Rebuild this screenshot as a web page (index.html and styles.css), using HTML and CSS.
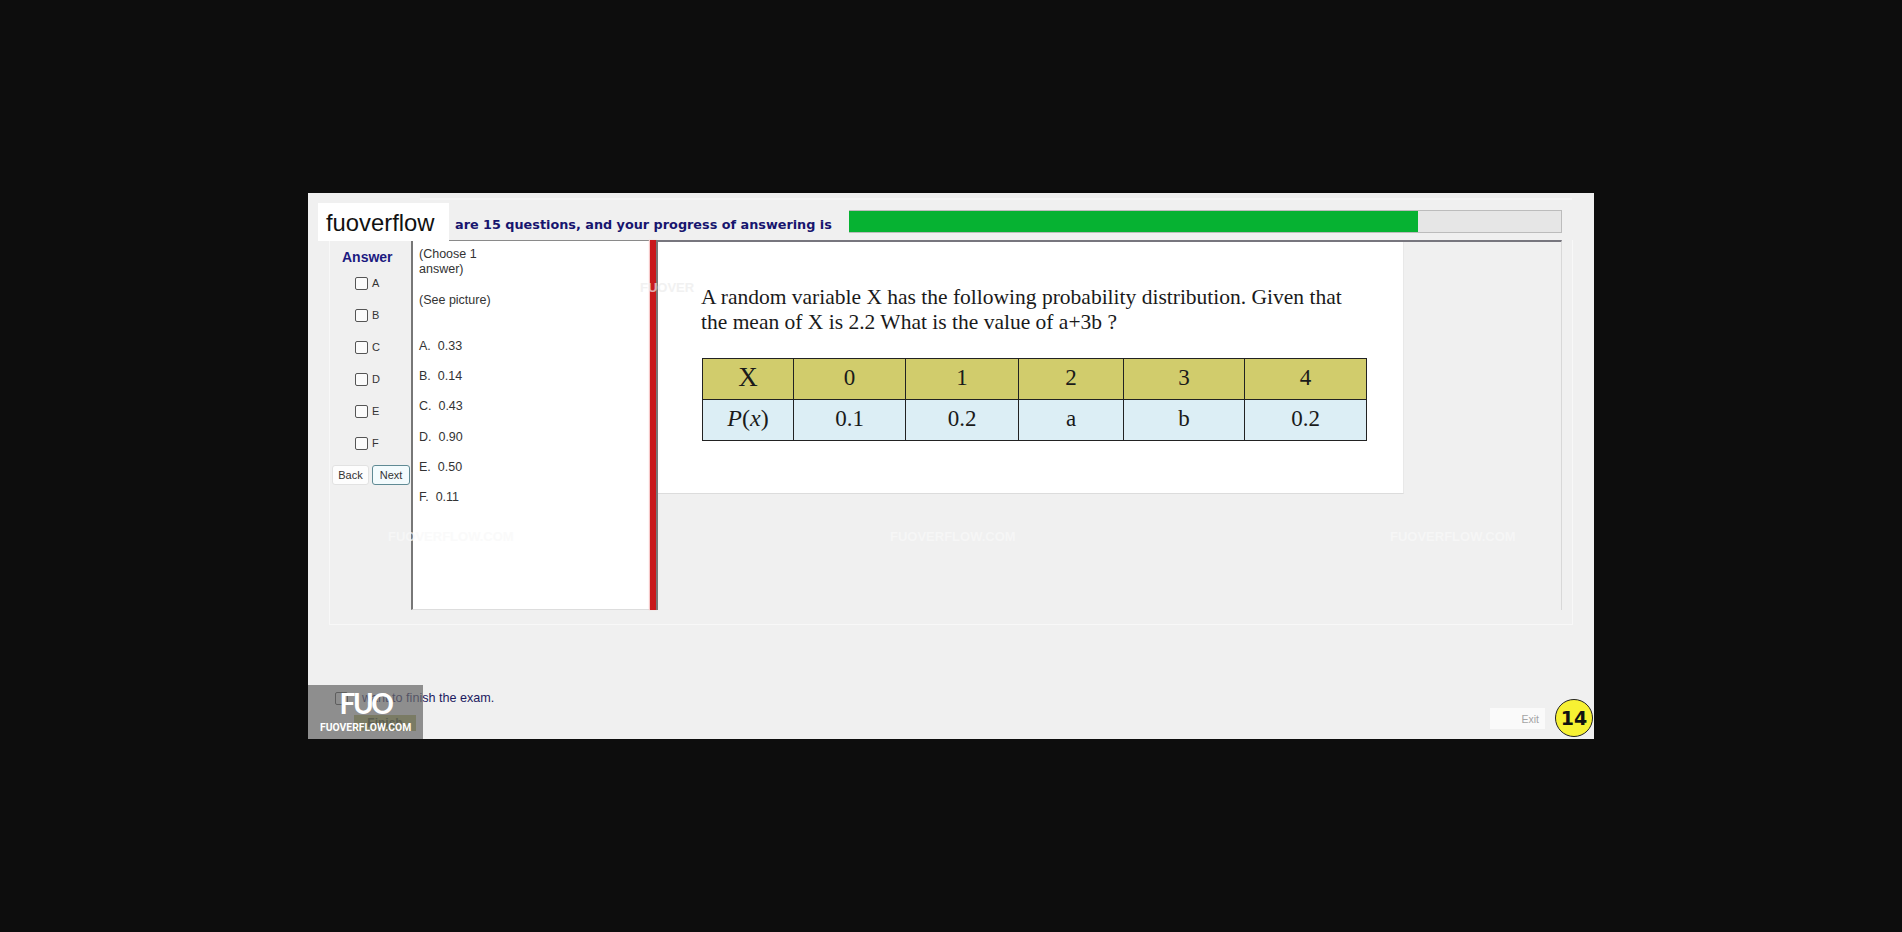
FILE: index.html
```html
<!DOCTYPE html>
<html lang="en">
<head>
<meta charset="utf-8">
<title>Exam</title>
<link rel="stylesheet" href="styles.css">
</head>
<body>
<div class="window">
  <div class="top-tab"></div>
  <header class="progress-row">
    <span class="progress-label">are 15 questions, and your progress of answering is</span>
    <div class="progress-track"><div class="progress-fill"></div></div>
  </header>
  <main class="panel">
    <section class="answers">
      <div class="answers-title">Answer</div>
      <label class="choice"><span class="box"></span>A</label>
      <label class="choice"><span class="box"></span>B</label>
      <label class="choice"><span class="box"></span>C</label>
      <label class="choice"><span class="box"></span>D</label>
      <label class="choice"><span class="box"></span>E</label>
      <label class="choice"><span class="box"></span>F</label>
      <div class="nav">
        <button class="btn">Back</button>
        <button class="btn btn-next">Next</button>
      </div>
    </section>
    <section class="question">
      <p class="q-note">(Choose 1<br>answer)</p>
      <p class="q-see">(See picture)</p>
      <ul class="options">
        <li>A.&nbsp; 0.33</li>
        <li>B.&nbsp; 0.14</li>
        <li>C.&nbsp; 0.43</li>
        <li>D.&nbsp; 0.90</li>
        <li>E.&nbsp; 0.50</li>
        <li>F.&nbsp; 0.11</li>
      </ul>
    </section>
    <div class="splitter"></div>
    <section class="viewer">
      <div class="picture">
        <p class="picture-text">A random variable X has the following probability distribution. Given that<br>the mean of X is 2.2 What is the value of a+3b ?</p>
        <table class="dist">
          <tr class="row-head"><th>X</th><td>0</td><td>1</td><td>2</td><td>3</td><td>4</td></tr>
          <tr class="row-body"><th><i>P</i>(<i>x</i>)</th><td>0.1</td><td>0.2</td><td>a</td><td>b</td><td>0.2</td></tr>
        </table>
      </div>
    </section>
  </main>
  <footer class="footer">
    <div class="finish">
      <label class="finish-check"><span class="box box-dark"></span>I want to finish the exam.</label>
      <button class="btn-finish">Finish</button>
    </div>
    <button class="btn-exit">Exit</button>
  </footer>

  <div class="brand">fuoverflow</div>
  <div class="mark mark-1">FUOVERFLOW.COM</div>
  <div class="mark mark-2">FUOVERFLOW.COM</div>
  <div class="mark mark-3">FUOVERFLOW.COM</div>
  <div class="mark mark-4">FUOVER</div>
  <div class="logo"><span class="logo-big">FUO</span><span class="logo-small">FUOVERFLOW.COM</span></div>
  <div class="badge">14</div>
</div>
</body>
</html>
```
FILE: styles.css
```css
* { box-sizing: border-box; }
html, body { height: 100%; }
body {
  margin: 0;
  background: #0d0d0d;
  display: flex;
  align-items: center;
  justify-content: center;
  font-family: "Liberation Sans", Arial, sans-serif;
}
.window {
  position: relative;
  width: 1286px;
  height: 546px;
  background: #f0f0f0;
  display: flex;
  flex-direction: column;
  overflow: hidden;
  color: #222;
}
.top-tab {
  position: absolute;
  left: 112px;
  right: 22px;
  top: 5px;
  height: 2px;
  background: #f7f7f7;
}
.progress-row {
  display: flex;
  align-items: center;
  height: 23px;
  margin-top: 17px;
  padding-left: 147px;
  padding-right: 32px;
}
.progress-label {
  width: 394px;
  padding-top: 6px;
  font: bold 12.8px "DejaVu Sans", Verdana, sans-serif;
  color: #17156e;
  white-space: nowrap;
}
.progress-track {
  flex: 1;
  height: 23px;
  background: #e6e6e6;
  border: 1px solid #bcbcbc;
}
.progress-fill {
  width: 569px;
  height: 21px;
  margin-left: -1px;
  background: #06b232;
}
.panel {
  margin: 7px 21px 0 21px;
  height: 385px;
  padding: 0 10px 14px 0;
  border: 1px solid #f8f8f8;
  border-top: 0;
  display: flex;
}
.answers {
  width: 81px;
  flex: none;
  padding-top: 8px;
  font-size: 11px;
}
.answers-title {
  height: 19px;
  line-height: 18px;
  padding-left: 12px;
  font-size: 14px;
  font-weight: bold;
  color: #1c1a80;
}
.choice {
  display: flex;
  align-items: center;
  height: 32px;
  padding-left: 25px;
  color: #333;
}
.box {
  width: 13px;
  height: 13px;
  margin-right: 4px;
  border: 1px solid #555;
  border-radius: 2px;
  background: #fbfbfb;
  flex: none;
}
.nav {
  display: flex;
  gap: 3px;
  margin-top: 6px;
  padding-left: 2px;
}
.btn {
  height: 20px;
  width: 37px;
  padding: 0;
  font: 11px "Liberation Sans", Arial, sans-serif;
  color: #333;
  background: #fdfdfd;
  border: 1px solid #e2e2e2;
  border-radius: 3px;
}
.btn-next {
  width: 38px;
  background: #f3fbfd;
  border-color: #5f8a94;
}
.question {
  width: 239px;
  flex: none;
  background: #fff;
  border-left: 2px solid #777;
  border-top: 1px solid #8a8a8a;
  border-bottom: 1px solid #ddd;
  padding: 6px 0 0 6px;
  font-size: 12.5px;
  color: #333;
}
.q-note { margin: 0; line-height: 15px; }
.q-see { margin: 16px 0 0; line-height: 15px; }
.options {
  list-style: none;
  margin: 31px 0 0;
  padding: 0;
}
.options li { height: 30.2px; line-height: 15px; }
.splitter {
  width: 8px;
  flex: none;
  background: #c8191c;
  border-right: 2px solid #777;
  box-shadow: -1px 0 1px #f6c9c9;
}
.viewer {
  flex: 1;
  border-top: 2px solid #77767e;
  border-right: 1px solid #d8d8d8;
}
.picture {
  width: 746px;
  height: 252px;
  background: #fff;
  border-bottom: 1px solid #dcdcdc;
  border-right: 1px solid #e8e8e8;
  padding: 43px 0 0 43px;
}
.picture-text {
  margin: 0;
  font: 21.5px/24.5px "Liberation Serif", "Times New Roman", serif;
  color: #1a1a1a;
  white-space: nowrap;
}
.dist {
  margin: 24px 0 0 1px;
  width: 664px;
  height: 82px;
  border-collapse: collapse;
  table-layout: fixed;
  font: 23px "Liberation Serif", "Times New Roman", serif;
  color: #1a1a1a;
  text-align: center;
}
.dist th, .dist td { border: 1px solid #222; padding: 0 0 3px; font-weight: normal; }
.dist th { width: 91px; }
.dist td:nth-child(2) { width: 112px; }
.dist td:nth-child(3) { width: 113px; }
.dist td:nth-child(4) { width: 105px; }
.dist td:nth-child(5) { width: 121px; }
.dist td:nth-child(6) { width: 122px; }
.row-head { height: 41px; background: #d1cc6c; }
.row-head th { font-size: 27px; }
.row-body { height: 41px; background: #dceef5; }
.row-body th { font-size: 24px; }
.footer {
  flex: 1;
  display: flex;
  justify-content: space-between;
  align-items: flex-end;
  padding: 0 49px 10px 27px;
}
.finish { display: flex; flex-direction: column; }
.finish-check {
  display: flex;
  align-items: center;
  font-size: 12.6px;
  color: #1c1a60;
}
.box-dark { margin-right: 7px; border-color: #444; background: none; }
.btn-finish {
  margin: 10px 0 -2px 19px;
  width: 62px;
  height: 16px;
  padding: 0;
  border: 0;
  background: #a9ad5a;
  color: #3f4a1a;
  font: bold 12px "Liberation Sans", Arial, sans-serif;
}
.btn-exit {
  width: 55px;
  height: 21px;
  padding: 0 6px 0 0;
  text-align: right;
  background: #fafafa;
  border: 0;
  color: #a4a4a4;
  font: 10.5px "Liberation Sans", Arial, sans-serif;
}
.brand {
  position: absolute;
  left: 10px;
  top: 10px;
  width: 131px;
  height: 38px;
  padding-left: 8px;
  background: #fff;
  color: #111;
  font: 23.8px/40px "Liberation Sans", Arial, sans-serif;
}
.mark {
  position: absolute;
  color: #f9f9f9;
  font: bold 13px "Liberation Sans", Arial, sans-serif;
  white-space: nowrap;
  opacity: 0.7;
}
.mark-1 { left: 80px; top: 336px; }
.mark-2 { left: 582px; top: 336px; }
.mark-3 { left: 1082px; top: 336px; }
.mark-4 { left: 332px; top: 87px; color: #ececec; }
.logo {
  position: absolute;
  left: 0;
  bottom: 0;
  width: 115px;
  height: 54px;
  background: rgba(104, 104, 104, 0.72);
  color: #fff;
  display: flex;
  flex-direction: column;
  align-items: center;
}
.logo-big {
  font: bold 28px/30px "Lato", "Liberation Sans", sans-serif;
  letter-spacing: -2.5px;
  margin-top: 3px;
  height: 30px;
}
.logo-small {
  font: bold 11.5px/12px "Roboto", sans-serif;
  margin-top: 3px;
  white-space: nowrap;
  transform: scaleX(0.9);
}
.badge {
  position: absolute;
  right: 1px;
  bottom: 2px;
  width: 38px;
  height: 38px;
  border-radius: 50%;
  background: #f7f133;
  border: 1px solid #222;
  color: #111;
  text-align: center;
  font: bold 19px/36px "DejaVu Sans", sans-serif;
}
```
